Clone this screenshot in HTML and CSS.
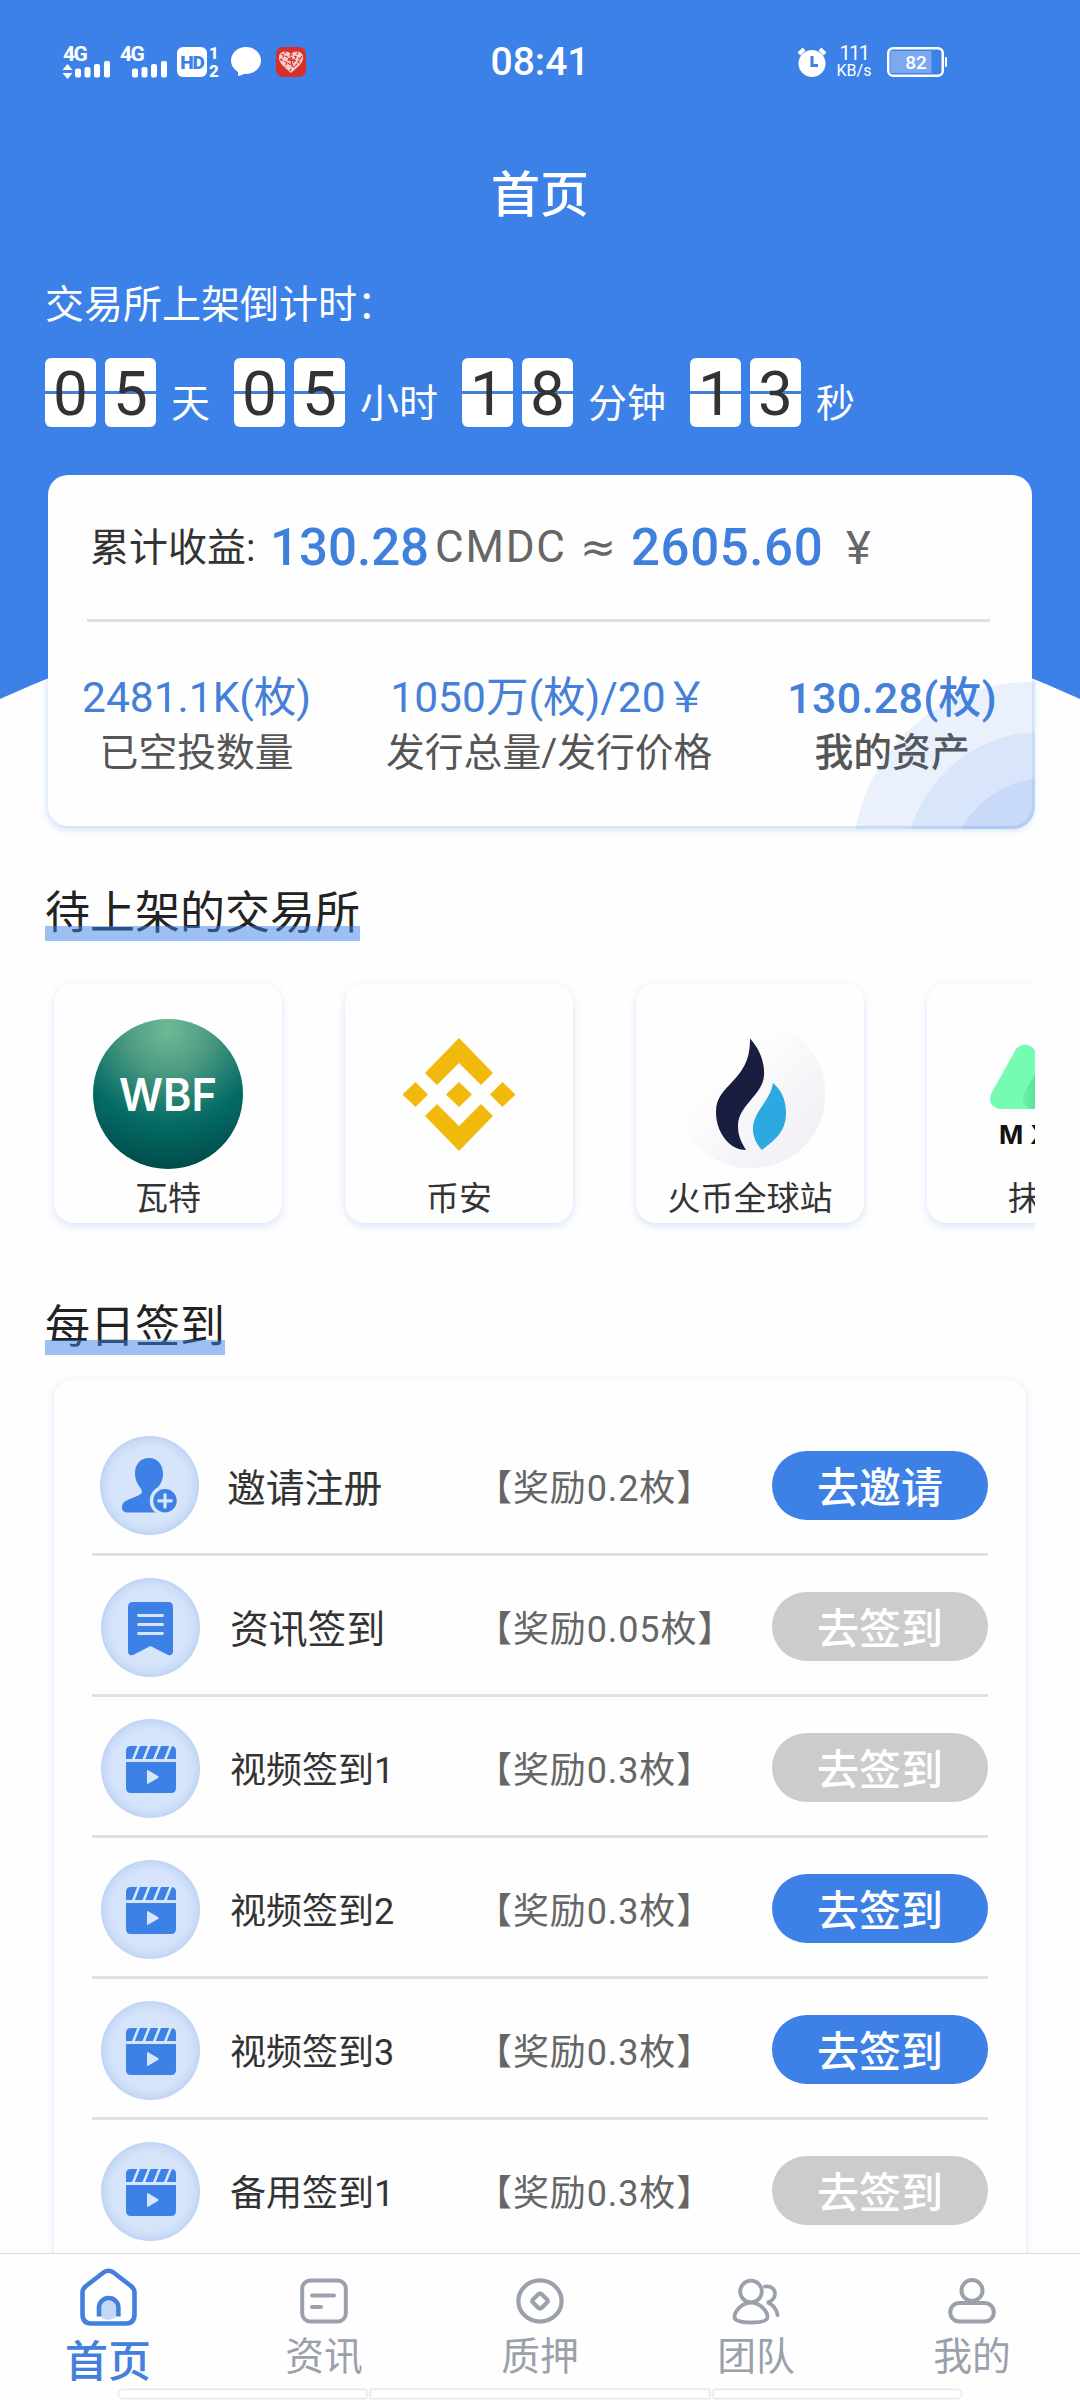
FILE: index.html
```html
<!DOCTYPE html>
<html lang="zh-CN">
<head>
<meta charset="utf-8">
<title>首页</title>
<link rel="stylesheet" href="styles.css">
</head>
<body>
<svg class="defs" width="0" height="0" aria-hidden="true">
  <defs>
    <radialGradient id="disc"><stop offset="0" stop-color="#d8e6fa"/><stop offset=".78" stop-color="#d5e4fa"/><stop offset=".93" stop-color="#c9dbf7"/><stop offset="1" stop-color="#bdd2f3"/></radialGradient>
    <radialGradient id="wbf" cx=".5" cy=".07" r=".95"><stop offset="0" stop-color="#6fba97"/><stop offset=".3" stop-color="#4c9a80"/><stop offset=".65" stop-color="#056c65"/><stop offset="1" stop-color="#004a49"/></radialGradient>
    <linearGradient id="huobi" x1=".15" y1=".15" x2=".85" y2=".85"><stop offset=".25" stop-color="#fefefe"/><stop offset="1" stop-color="#f0f0f6"/></linearGradient>
    <linearGradient id="mxc" x1="0" y1="0" x2="1" y2="0"><stop offset="0" stop-color="#6bf0a5"/><stop offset=".35" stop-color="#4fd88f"/><stop offset="1" stop-color="#30b070"/></linearGradient>
    <symbol id="video" viewBox="0 0 99 99">
      <circle cx="49.500" cy="49.500" r="49.500" fill="url(#disc)"/>
      <path d="M25 40V32q0-5 5-5H70q5 0 5 5v8z" fill="#3d80e6"/>
      <path d="M38 26l-6 15M48.500 26l-6 15M59 26l-6 15M70 26l-6 15" stroke="#d8e6fa" stroke-width="2.600"/>
      <path d="M25 43H75V69q0 5-5 5H30q-5 0-5-5z" fill="#3d80e6"/>
      <path d="M46 52v12q0 1.500 1.500.6l9.500-5.600q1.200-1 0-2l-9.500-5.600Q46 50.500 46 52z" fill="#d8e6fa"/>
    </symbol>
  </defs>
</svg>

<main class="screen">
  <svg class="backdrop" viewBox="0 0 1080 700"><path d="M0 0H1080V699Q540 455 0 699Z" fill="#3c81e8"/></svg>

  <div class="status">
    <div class="status-left">
      <svg width="47" height="34" viewBox="0 0 47 34"><text x="0" y="16" class="net">4G</text><path d="M4.500 19l5 6h-10zM4.500 34l5-6h-10z" fill="#fff"/><g fill="#fff"><rect x="12" y="23.500" width="6" height="9" rx="2"/><rect x="21.500" y="22" width="6" height="10.500" rx="2"/><rect x="31" y="19" width="6" height="13.500" rx="2"/><rect x="41" y="16" width="6" height="16.500" rx="2"/></g></svg>
      <svg width="47" height="34" viewBox="0 0 47 34"><text x="0" y="16" class="net">4G</text><g fill="#fff"><rect x="12" y="23.500" width="6" height="9" rx="2"/><rect x="21.500" y="22" width="6" height="10.500" rx="2"/><rect x="31" y="19" width="6" height="13.500" rx="2"/><rect x="41" y="16" width="6" height="16.500" rx="2"/></g></svg>
      <svg width="42" height="32" viewBox="0 0 42 32"><rect y="1" width="30" height="30" rx="6" fill="#fff"/><text x="15" y="23" class="hd">HD</text><text x="37" y="13" class="sim">1</text><text x="37" y="31" class="sim">2</text></svg>
      <svg class="chat" width="30" height="32" viewBox="0 0 30 32"><ellipse cx="15" cy="14.500" rx="15" ry="13.500" fill="#fff"/><path d="M7 24v6q5-1 9-4z" fill="#fff"/></svg>
      <svg class="heart" width="30" height="32" viewBox="0 0 30 32"><rect y="1" width="30" height="30" rx="7" fill="#d92f2b"/><path d="M15 27C7 20 2 16 3 10 4 5 11 4 15 8c4-4 11-3 12 2 1 6-4 10-12 17z" fill="#f6cfca"/><path d="M5 8l19 9M4 13l15 8M10 5l-5 10M15 8L9 21M22 6l-8 19M26 10l-8 12M14 8l12 6" stroke="#d92f2b" stroke-width="1.100" stroke-dasharray="3 1.500"/><path d="M12 14h7M15.500 11v8" stroke="#d92f2b" stroke-width="1.500"/></svg>
    </div>
    <div class="clock">08:41</div>
    <div class="status-right">
      <svg width="30" height="32" viewBox="0 0 30 32"><circle cx="15" cy="17.500" r="13.500" fill="#fff"/><path d="M2 8l5-5M28 8l-5-5" stroke="#fff" stroke-width="4"/><path d="M15 10v9.500h6" fill="none" stroke="#3c81e8" stroke-width="3"/></svg>
      <div class="speed"><span class="speed-num">111</span><span class="speed-unit">KB/s</span></div>
      <svg width="60" height="30" viewBox="0 0 60 30"><rect x="1.250" y="1.250" width="54.500" height="27.500" rx="5" fill="none" stroke="#fff" stroke-width="2.500"/><rect x="3.500" y="4" width="41" height="22" rx="1" fill="#7ba9f0"/><path d="M58 10h1q1 0 1 2v6q0 2-1 2h-1z" fill="#fff"/><text x="29" y="22" class="charge">82</text></svg>
    </div>
  </div>

  <h1 class="title">首页</h1>
  <p class="launch-label">交易所上架倒计时：</p>
  <div class="countdown">
    <span class="flip">0</span><span class="flip">5</span><span class="unit">天</span>
    <span class="flip">0</span><span class="flip">5</span><span class="unit">小时</span>
    <span class="flip">1</span><span class="flip">8</span><span class="unit">分钟</span>
    <span class="flip">1</span><span class="flip">3</span><span class="unit">秒</span>
  </div>

  <section class="earnings">
    <div class="total">
      <span class="total-label">累计收益:</span><b class="amount">130.28</b><span class="currency">CMDC</span><span class="approx">≈</span><b class="amount cny">2605.60</b><span class="yen">¥</span>
    </div>
    <div class="stats">
      <div class="stat"><span class="stat-value">2481.1K(枚)</span><span class="stat-name">已空投数量</span></div>
      <div class="stat"><span class="stat-value">1050万(枚)/20￥</span><span class="stat-name">发行总量/发行价格</span></div>
      <div class="stat mine"><span class="stat-value">130.28(枚)</span><span class="stat-name">我的资产</span></div>
    </div>
    <svg class="ripples" width="179" height="147" viewBox="0 0 179 147"><g fill="#3c81e8" fill-opacity=".1"><ellipse cx="173" cy="178" rx="176" ry="178"/><ellipse cx="186" cy="186" rx="137" ry="136"/><ellipse cx="194" cy="194" rx="101" ry="99"/></g></svg>
  </section>

  <h2 class="heading">待上架的交易所</h2>
  <div class="exchanges">
    <div class="exchange">
      <svg width="150" height="150" viewBox="0 0 150 150"><circle cx="75" cy="75" r="75" fill="url(#wbf)"/><text x="75" y="92" class="wbf" textLength="98" lengthAdjust="spacingAndGlyphs">WBF</text></svg>
      <span class="exchange-name">瓦特</span>
    </div>
    <div class="exchange">
      <svg width="150" height="150" viewBox="0 0 150 150" fill="#f0b90b"><path d="M75 19l34 35-12 12-22-22-22 22-12-12zM75 132l34-35-12-12-22 22-22-22-12 12zM75 63l13 12.500-13 12.500-13-12.500zM31.500 63l12.500 12.500-12.500 12.500-13-12.500zM118.500 63l13 12.500-13 12.500-12.500-12.500z"/></svg>
      <span class="exchange-name">币安</span>
    </div>
    <div class="exchange">
      <svg width="150" height="150" viewBox="0 0 150 150"><circle cx="76" cy="75" r="74.500" fill="url(#huobi)"/><path d="M75 19.500C84 29 90 43 89 57c-2 20-26 29-26 50 0 11 4 17 8 24C54 131 41 113 41 93c0-29 35-30 34-73.500z" fill="#191e41"/><path d="M98 64c9 8 13 17 13 30 0 20-13 28-24 37-6-6-9-14-9-21 0-18 17-27 20-46z" fill="#2ba9e0"/></svg>
      <span class="exchange-name">火币全球站</span>
    </div>
    <div class="exchange">
      <svg width="150" height="150" viewBox="0 0 150 150"><path d="M50 30q9-9 18 0l31 50q1 10-8 10H34q-13-3-9-15z" fill="#76fbb2"/><path d="M72 50L57 76q-2 10 8 14h50q14-3 8-15L99 33q-7-8-14 0z" fill="url(#mxc)"/><text x="33" y="125" class="mxc">MXC</text></svg>
      <span class="exchange-name">抹茶</span>
    </div>
  </div>

  <h2 class="heading">每日签到</h2>
  <section class="tasks">
    <div class="task">
      <svg class="task-icon first" width="99" height="99" viewBox="0 0 99 99"><circle cx="49.500" cy="49.500" r="49.500" fill="url(#disc)"/><path d="M49 22c9 0 14 7 14 16 0 7-3 11-7 16-2 3-3 6-1 8 4 4 8 6 12 8v4q-1 2.500-4 2.500H28c-4 0-6-2-6-5 0-8 9-8 18-13 3-2 2-4 0-7-3-4-5-8-5-14 0-9 5-15.500 14-15.500z" fill="#3d80e6"/><circle cx="65" cy="64.800" r="13.500" fill="#3d80e6" stroke="#d8e6fa" stroke-width="3.500"/><path d="M65 58.500v12.600M58.700 64.800h12.600" stroke="#d8e6fa" stroke-width="3.200" stroke-linecap="round"/></svg>
      <span class="task-name">邀请注册</span><span class="reward">【奖励0.2枚】</span><button class="action">去邀请</button>
    </div>
    <div class="task">
      <svg class="task-icon" width="99" height="99" viewBox="0 0 99 99"><circle cx="49.500" cy="49.500" r="49.500" fill="url(#disc)"/><path d="M32 24H67q5 0 5 5V73q0 5-5 4L49.500 68 32 77q-5 1-5-4V29q0-5 5-5z" fill="#3d80e6"/><path d="M37.500 37.500h24M37.500 46.500h24M37.500 55.500h24" stroke="#d8e6fa" stroke-width="2.800" stroke-linecap="round"/></svg>
      <span class="task-name">资讯签到</span><span class="reward">【奖励0.05枚】</span><button class="action done">去签到</button>
    </div>
    <div class="task">
      <svg class="task-icon" width="99" height="99"><use href="#video"/></svg>
      <span class="task-name small">视频签到1</span><span class="reward">【奖励0.3枚】</span><button class="action done">去签到</button>
    </div>
    <div class="task">
      <svg class="task-icon" width="99" height="99"><use href="#video"/></svg>
      <span class="task-name small">视频签到2</span><span class="reward">【奖励0.3枚】</span><button class="action">去签到</button>
    </div>
    <div class="task">
      <svg class="task-icon" width="99" height="99"><use href="#video"/></svg>
      <span class="task-name small">视频签到3</span><span class="reward">【奖励0.3枚】</span><button class="action">去签到</button>
    </div>
    <div class="task">
      <svg class="task-icon" width="99" height="99"><use href="#video"/></svg>
      <span class="task-name small">备用签到1</span><span class="reward">【奖励0.3枚】</span><button class="action done">去签到</button>
    </div>
  </section>
</main>

<nav class="tabs">
  <a class="tab active">
    <svg width="60" height="60" viewBox="0 0 60 60" fill="none" stroke="#4380dc" stroke-width="4.600"><path d="M23 50V41a7.500 8 0 0 1 15 0v9q-7.500 6-15 0z" fill="#c3d8f7" stroke="none"/><path d="M25.500 5.500q5-3.500 10 0L53 19q3.500 3 3.500 6V47q0 9.500-8.500 9.500H13Q4.500 56.500 4.500 47V25q0-3 3.500-6z"/><path d="M21 49.500V40.500a9.700 9.500 0 0 1 19.400 0v9"/></svg>
    <span>首页</span>
  </a>
  <a class="tab">
    <svg width="48" height="48" viewBox="0 0 48 48" fill="none" stroke="#9aa1ab" stroke-width="4"><rect x="2.200" y="3.500" width="43.600" height="41" rx="8"/><path d="M12 18.500h22M12 30h9" stroke-linecap="round"/></svg>
    <span>资讯</span>
  </a>
  <a class="tab">
    <svg width="48" height="48" viewBox="0 0 48 48" fill="none" stroke="#9aa1ab" stroke-width="4.200"><ellipse cx="24" cy="24" rx="21.600" ry="20.600"/><path d="M22 17.500q2-2 4 0l5 5q1.500 1.500 0 3l-5 5q-2 2-4 0l-5-5q-1.500-1.500 0-3z"/></svg>
    <span>质押</span>
  </a>
  <a class="tab">
    <svg width="48" height="48" viewBox="0 0 48 48" fill="none" stroke="#9aa1ab" stroke-width="3.800" stroke-linecap="round"><circle cx="19" cy="14.500" r="10.800"/><path d="M19 25.500c9 0 16.500 9 16.500 14.500q0 5.500-16.500 5.500T2.500 40c0-5.500 7.500-14.500 16.500-14.500zM33 9.500c6-1 10 2.500 10 7.500 0 4.500-4 7.500-8 8.500 5 1 10 7 10.500 12.500"/></svg>
    <span>团队</span>
  </a>
  <a class="tab">
    <svg width="48" height="48" viewBox="0 0 48 48" fill="none" stroke="#9aa1ab" stroke-width="4"><circle cx="24" cy="13.500" r="10.500"/><rect x="2.200" y="26" width="43.600" height="18.500" rx="9.250"/></svg>
    <span>我的</span>
  </a>
  <div class="gesture"><i></i><i></i><i></i></div>
</nav>
</body>
</html>
```
FILE: styles.css
```css
* { box-sizing: border-box; }
body { margin: 0; width: 1080px; height: 2400px; display: flex; flex-direction: column; overflow: hidden; background: #fefefe; color: #333; font-family: Roboto, "Noto Sans CJK SC", sans-serif; }
h1, h2, p { margin: 0; }
svg { display: block; flex: none; }
.defs { position: absolute; }
.screen { position: relative; height: 2253px; overflow: hidden; flex: none; }
.backdrop { position: absolute; top: 0; left: 0; width: 1080px; height: 700px; z-index: -1; }

.status { height: 124px; display: grid; grid-template-columns: 1fr auto 1fr; align-items: center; color: #fff; }
.status svg { overflow: visible; }
.status-left { display: flex; align-items: center; gap: 10px; padding-left: 63px; }
.chat { margin-left: 2px; }
.heart { margin-left: 5px; }
.net { font-size: 21px; font-weight: 700; letter-spacing: -1.500px; fill: #fff; }
.hd { font-size: 19px; font-weight: 900; letter-spacing: -1px; fill: #3c81e8; text-anchor: middle; }
.sim { font-size: 17px; font-weight: 800; fill: #fff; text-anchor: middle; }
.clock { font-size: 39px; font-weight: 500; line-height: 40px; }
.status-right { display: flex; align-items: center; justify-content: flex-end; padding-right: 133px; }
.speed { display: flex; flex-direction: column; align-items: center; width: 36px; margin: 0 15px 0 9px; }
.speed-num { font-size: 20px; line-height: 17px; letter-spacing: -1.500px; }
.speed-unit { font-size: 16px; line-height: 17px; }
.charge { font-size: 19px; fill: #fff; text-anchor: middle; font-weight: 500; }

.title { height: 140px; line-height: 144px; text-align: center; font-size: 49px; font-weight: 500; color: #fff; }
.launch-label { margin: 22px 0 33px 45px; font-size: 39px; line-height: 39px; color: #fff; }
.countdown { display: flex; height: 69px; padding-left: 45px; }
.flip { width: 51px; height: 69px; border-radius: 6px; margin-right: 9px; font-size: 62px; line-height: 72px; text-align: center; background: linear-gradient(#fff 33px, #437fd8 33px, #437fd8 36px, #fff 36px); }
.unit { margin: 27px 24px 0 6px; font-size: 39px; line-height: 39px; color: #fff; }

.earnings { position: relative; width: 984px; height: 351px; margin: 48px 0 0 48px; border-radius: 20px; background: #fefefe; box-shadow: 0 3px 8px rgba(60, 129, 232, .28); }
.total { display: flex; align-items: center; height: 147px; margin: 0 42px 0 39px; padding-left: 3px; border-bottom: 3px solid #e0e0e0; white-space: nowrap; color: #666; }
.total-label { width: 180px; padding-bottom: 6px; font-size: 39px; color: #333; }
.amount { width: 165px; font-size: 51px; font-weight: 500; color: #3f80dd; }
.amount.cny { width: 213px; letter-spacing: .6px; }
.currency { width: 145px; font-size: 44px; letter-spacing: 1.800px; }
.approx { width: 51px; font-family: "DejaVu Sans", sans-serif; font-size: 43px; }
.yen { padding-left: 2px; font-size: 47px; }
.stats { display: flex; justify-content: space-between; padding: 51px 35px 0 34px; }
.stat { display: flex; flex-direction: column; align-items: center; white-space: nowrap; }
.stat-value { font-size: 42.500px; line-height: 50px; color: #4580d8; }
.stat-name { margin-top: 5px; font-size: 38.800px; line-height: 50px; color: #555; }
.mine { font-weight: 500; }
.mine .stat-value { font-size: 43px; letter-spacing: .3px; }
.ripples { position: absolute; right: -3px; bottom: -3px; border-bottom-right-radius: 22px; }

.heading { position: relative; width: fit-content; height: 59px; margin: 56px 0 0 45px; font-size: 45px; line-height: 63px; font-weight: 400; color: #222; }
.heading::after { content: ""; position: absolute; left: 0; right: 0; bottom: 0; height: 15px; background: rgba(60, 129, 232, .5); }
.exchanges { display: flex; gap: 63px; width: 990px; margin-left: 45px; padding: 42px 0 17px 9px; overflow: hidden; }
.exchange { display: flex; flex: none; flex-direction: column; align-items: center; width: 228px; height: 240px; padding-top: 36px; border-radius: 20px; background: #fefefe; box-shadow: 0 3px 9px rgba(60, 129, 232, .2); }
.exchange-name { font-size: 33px; line-height: 59px; }
.wbf { font-family: Inter, sans-serif; font-size: 45px; font-weight: 600; fill: #fff; text-anchor: middle; }
.mxc { font-family: Inter, sans-serif; font-size: 26px; font-weight: 700; letter-spacing: 7px; fill: #111; }

.tasks { width: 972px; height: 940px; margin: 24px 0 0 54px; padding: 36px 38px; border-radius: 20px; background: #fefefe; box-shadow: 0 2px 9px rgba(60, 129, 232, .2); }
.task { display: grid; grid-template-columns: 136px 248px 1fr 216px; align-items: center; height: 141px; padding-top: 3px; border-bottom: 3px solid #e0e0e0; white-space: nowrap; }
.task-icon { margin: 2px 0 0 9px; }
.task-icon.first { margin: 0 0 0 8px; }
.task-name { padding: 0 0 2px 2px; font-size: 38.800px; }
.task:first-child .task-name { padding-left: 0; margin-left: -1px; }
.task-name.small { font-size: 36px; }
.reward { padding-bottom: 2px; font-size: 36px; letter-spacing: .9px; color: #666; }
.action { height: 69px; padding: 0 0 2px; border: 0; border-radius: 35px; font: 500 42px Roboto, "Noto Sans CJK SC", sans-serif; color: #fff; background: #3d80e6; }
.action.done { background: #ccc; }

.tabs { display: grid; grid-template-columns: repeat(5, 216px); grid-template-rows: 136px 10px; height: 147px; border-top: 1px solid #ddd; background: #fefefe; }
.tab { display: flex; flex-direction: column; align-items: center; padding-top: 23px; font-size: 38.800px; color: #9aa1ab; }
.tab span { margin-top: 9px; line-height: 46px; }
.tab.active { padding-top: 13px; font-size: 43px; font-weight: 500; color: #4380dc; }
.tab.active span { margin-top: 12px; }
.gesture { grid-column: 1 / -1; display: grid; grid-template-columns: 247px 338px 247px; gap: 5px; padding-left: 119px; height: 8px; }
.gesture i { background: #fff; box-shadow: 0 0 2px 1px #ddd; }
.gesture i:first-child { border-radius: 4px 0 0 4px; }
.gesture i:last-child { border-radius: 0 4px 4px 0; }
```
